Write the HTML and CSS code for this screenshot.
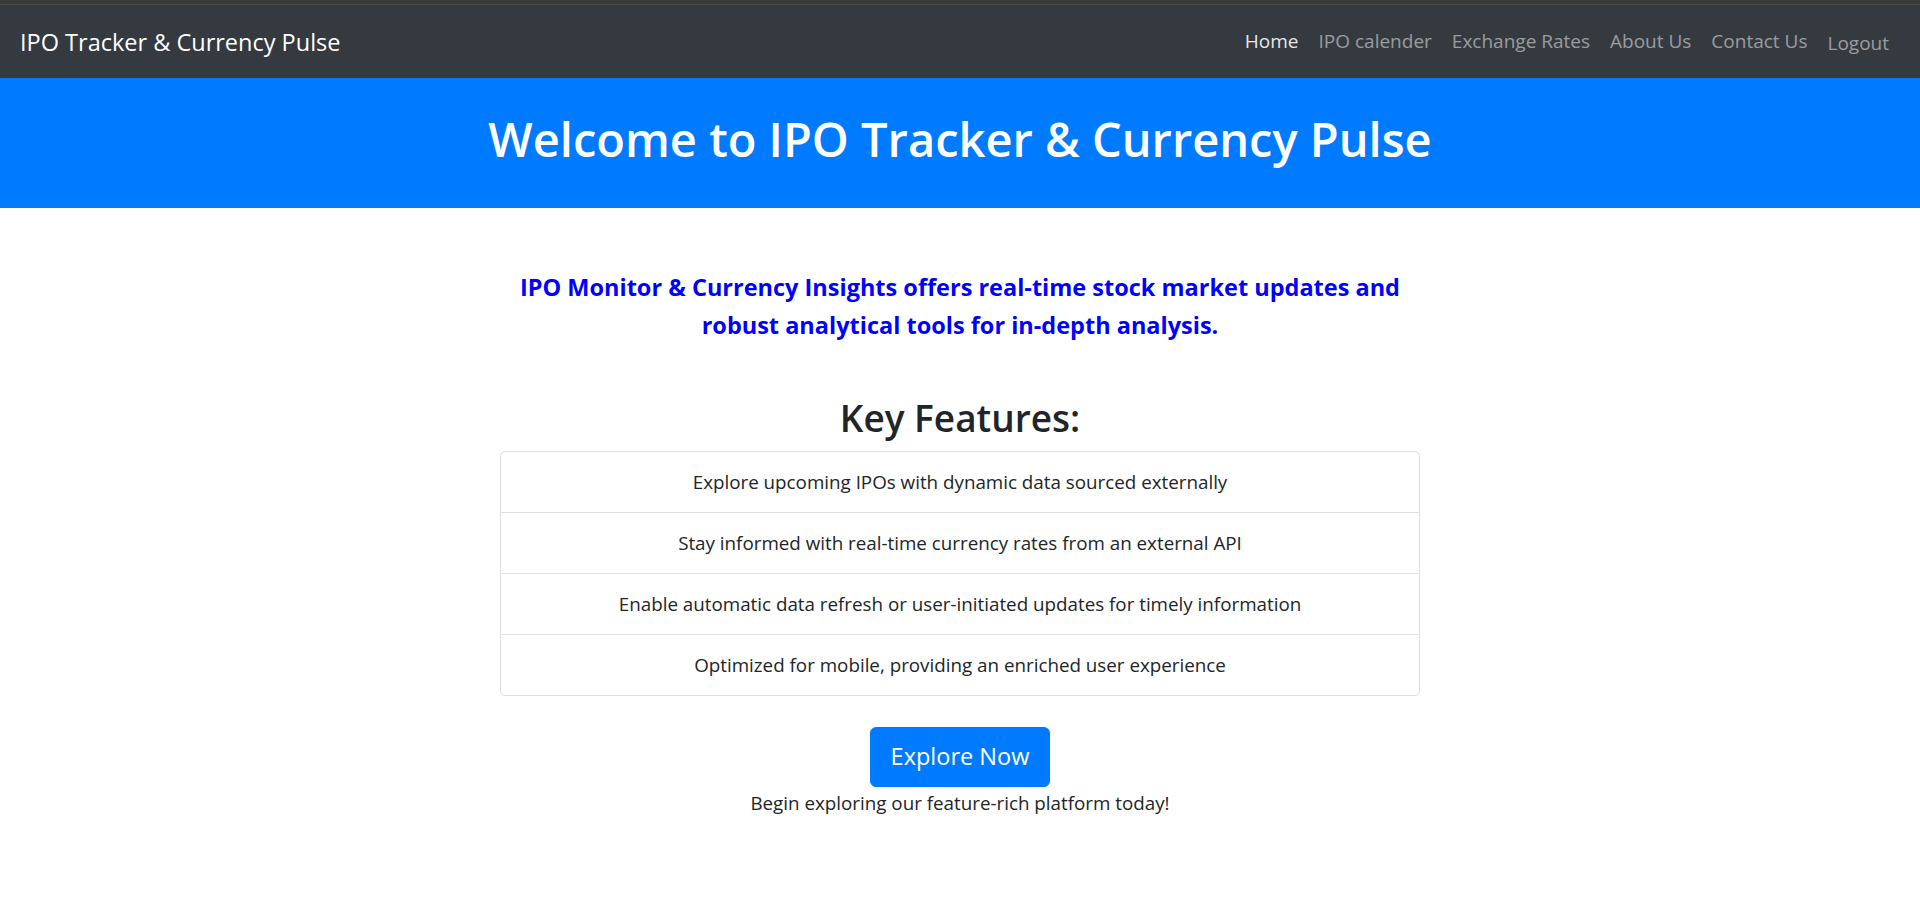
FILE: index.html
```html
<!DOCTYPE html>
<html lang="en">
<head>
<meta charset="utf-8">
<title>IPO Tracker &amp; Currency Pulse</title>
<link rel="stylesheet" href="styles.css">
</head>
<body>
<div class="top-strip"></div>
<nav class="navbar">
  <a class="brand" href="#">IPO Tracker &amp; Currency Pulse</a>
  <ul class="nav-links">
    <li><a class="nav-link active" href="#">Home</a></li>
    <li><a class="nav-link" href="#">IPO calender</a></li>
    <li><a class="nav-link" href="#">Exchange Rates</a></li>
    <li><a class="nav-link" href="#">About Us</a></li>
    <li><a class="nav-link" href="#">Contact Us</a></li>
    <li><a class="nav-link logout" href="#">Logout</a></li>
  </ul>
</nav>
<header class="jumbotron">
  <h1>Welcome to IPO Tracker &amp; Currency Pulse</h1>
</header>
<main class="content">
  <p class="intro">IPO Monitor &amp; Currency Insights offers real-time stock market updates and<br>robust analytical tools for in-depth analysis.</p>
  <h2 class="features-title">Key Features:</h2>
  <ul class="list-group">
    <li class="list-item">Explore upcoming IPOs with dynamic data sourced externally</li>
    <li class="list-item">Stay informed with real-time currency rates from an external API</li>
    <li class="list-item">Enable automatic data refresh or user-initiated updates for timely information</li>
    <li class="list-item">Optimized for mobile, providing an enriched user experience</li>
  </ul>
  <a class="btn-explore" href="#">Explore Now</a>
  <p class="cta-note">Begin exploring our feature-rich platform today!</p>
</main>
</body>
</html>
```
FILE: styles.css
```css
* { box-sizing: border-box; }
html, body { margin: 0; padding: 0; }
body {
  font-family: "Open Sans", "Noto Sans", Arial, sans-serif;
  font-size: 18.8px;
  line-height: 1.5;
  color: #212529;
  background: #fff;
}
a { text-decoration: none; }

.top-strip {
  height: 5px;
  background: #3a3a3a;
  border-bottom: 1px solid #4a4a4a;
}

.navbar {
  height: 73px;
  background: #343a40;
  display: flex;
  align-items: center;
  justify-content: space-between;
  padding: 0 21px 0 20px;
}
.brand {
  color: #fff;
  font-size: 23.5px;
  line-height: 1.5;
  padding-top: 3px;
}
.nav-links {
  display: flex;
  list-style: none;
  margin: 0;
  padding: 2px 0 0;
}
.nav-link {
  display: block;
  padding: 0 10px;
  font-size: 19px;
  color: rgba(255, 255, 255, 0.5);
}
.nav-link.active { color: rgba(255, 255, 255, 0.9); }
.nav-link.logout { padding-top: 2px; }

.jumbotron {
  background: #007bff;
  color: #fff;
  text-align: center;
  height: 130px;
  padding-top: 33px;
}
.jumbotron h1 {
  margin: 0;
  font-size: 47px;
  font-weight: 600;
  line-height: 1.2;
}

.content {
  width: 920px;
  margin: 0 auto;
  text-align: center;
}
.intro {
  margin: 61px 0 0;
  color: #0000ff;
  font-weight: 700;
  font-size: 23.5px;
  line-height: 37.5px;
}
.features-title {
  margin: 50px 0 9px;
  font-size: 37px;
  font-weight: 600;
  line-height: 48px;
}
.list-group {
  list-style: none;
  margin: 0;
  padding: 0;
  border: 1px solid rgba(0, 0, 0, 0.125);
  border-radius: 5px;
}
.list-item {
  padding: 15px 20px;
  line-height: 30px;
  border-top: 1px solid rgba(0, 0, 0, 0.125);
}
.list-item:first-child { border-top: 0; }

.btn-explore {
  display: inline-block;
  margin-top: 31px;
  padding: 10px 20px;
  border: 1px solid #007bff;
  border-radius: 6px;
  background: #007bff;
  color: #fff;
  font-size: 23.5px;
  line-height: 37.5px;
}
.cta-note {
  margin: 1px 0 0;
  line-height: 30px;
}
```
